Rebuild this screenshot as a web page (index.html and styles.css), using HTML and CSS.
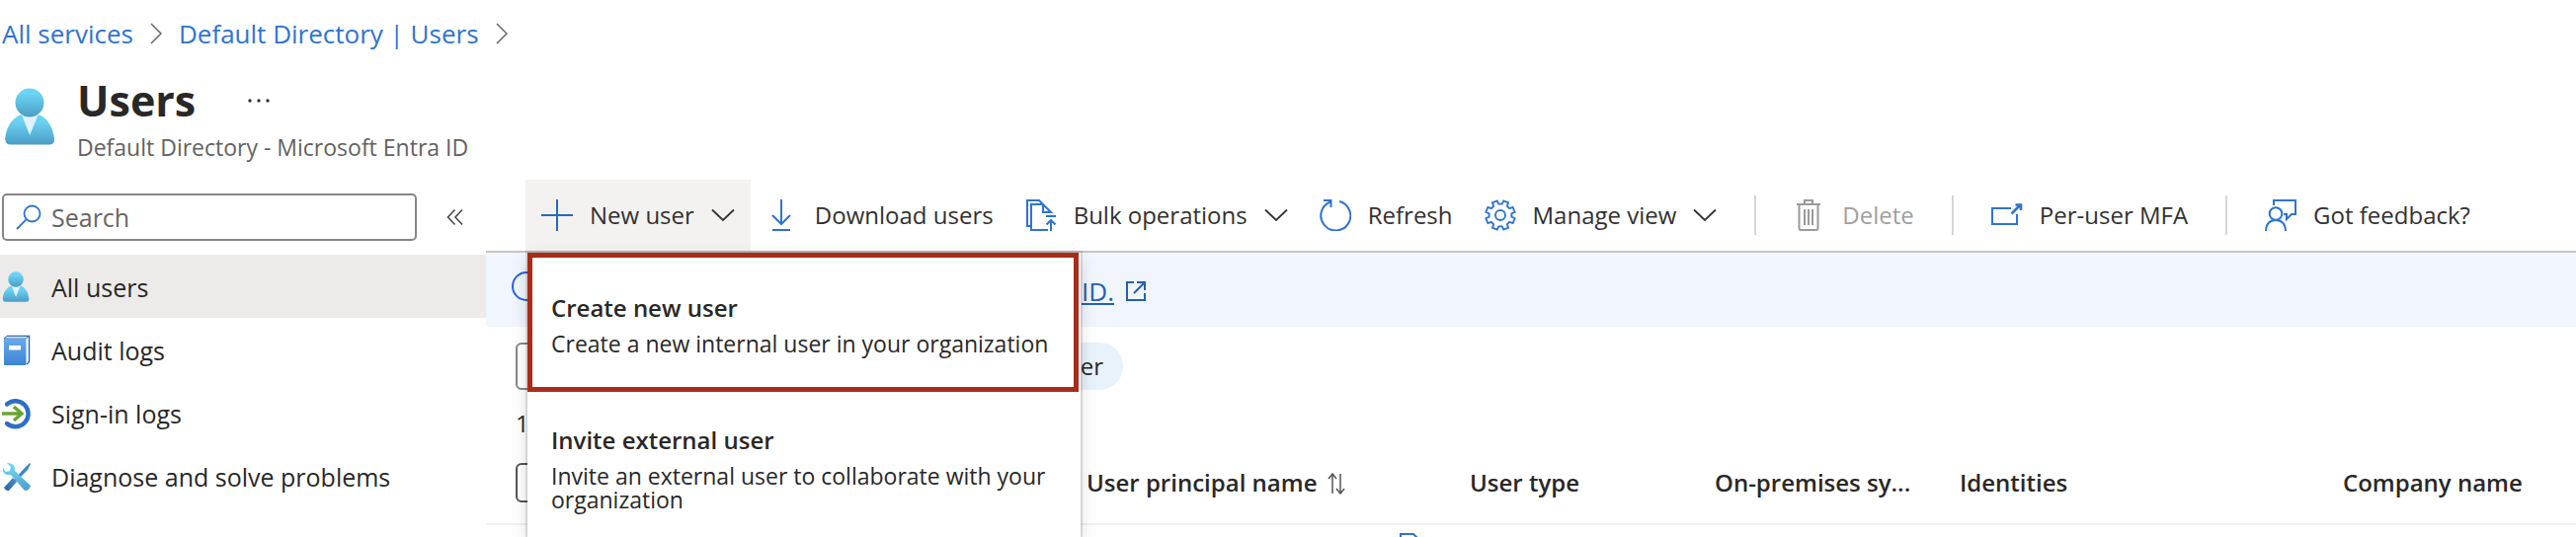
FILE: index.html
```
<!DOCTYPE html>
<html lang="en">
<head>
<meta charset="utf-8">
<title>Users - Microsoft Entra ID</title>
<link rel="stylesheet" href="styles.css">
</head>
<body>
<svg width="0" height="0" class="defs" aria-hidden="true">
  <defs>
    <linearGradient id="skin" x1="0" y1="0" x2="0" y2="1"><stop offset="0.2" stop-color="#6bd3f3"/><stop offset="1" stop-color="#4c9dc6"/></linearGradient>
    <linearGradient id="book" x1="0" y1="0" x2="0" y2="1"><stop offset="0" stop-color="#69aaea"/><stop offset="1" stop-color="#3d83d6"/></linearGradient>
    <linearGradient id="driver" x1="1" y1="0" x2="0" y2="1"><stop offset="0" stop-color="#4793c4"/><stop offset="1" stop-color="#2b5fa8"/></linearGradient>
    <symbol id="person" viewBox="0 0 52 58">
      <path d="M7 57.500h38.500q6 0 5.500-6C49.500 41 45 31 36 27.500H16.500C7.500 31 2 41 1.200 51.500Q1 57.500 7 57.500z" fill="url(#skin)"/>
      <path d="M18 27.500h16.500L26.200 48z" fill="#def3fb"/>
      <circle cx="26" cy="15" r="14.500" fill="url(#skin)"/>
    </symbol>
    <symbol id="down" viewBox="0 0 24 14"><path d="M1 1.500l11 10.500 11-10.500" fill="none" stroke="#333" stroke-width="1.800"/></symbol>
    <symbol id="next" viewBox="0 0 12 22"><path d="M1 1l10 10L1 21" fill="none" stroke="#666" stroke-width="1.500"/></symbol>
  </defs>
</svg>

<nav class="crumbs" aria-label="Breadcrumb">
  <a href="#">All services</a>
  <svg class="next"><use href="#next"/></svg>
  <a href="#">Default Directory | Users</a>
  <svg class="next"><use href="#next"/></svg>
</nav>

<header class="heading">
  <svg class="avatar"><use href="#person"/></svg>
  <div>
    <div class="title-row">
      <h1>Users</h1>
      <button class="more" aria-label="More"><svg width="24" height="6" viewBox="0 0 24 6" fill="#333"><circle cx="3" cy="3" r="1.700"/><circle cx="12" cy="3" r="1.700"/><circle cx="21" cy="3" r="1.700"/></svg></button>
    </div>
    <p class="subtitle">Default Directory - Microsoft Entra ID</p>
  </div>
</header>

<div class="shell">
  <aside class="side">
    <div class="search-row">
      <label class="search">
        <svg width="26" height="26" viewBox="0 0 26 26" fill="none" stroke="#2f74d0" stroke-width="1.800"><circle cx="16.500" cy="9.500" r="8"/><path d="M10.800 15.200L1 25"/></svg>
        <input type="text" placeholder="Search" aria-label="Search">
      </label>
      <button class="collapse" aria-label="Collapse"><svg width="18" height="18" viewBox="0 0 18 18" fill="none" stroke="#444" stroke-width="1.500"><path d="M8.500 1.500L1.500 9l7 7.500M16 1.500L9 9l7 7.500"/></svg></button>
    </div>
    <nav class="menu">
      <a href="#" class="active"><svg class="ico"><use href="#person" width="28" height="31"/></svg>All users</a>
      <a href="#"><svg class="ico" viewBox="0 0 30 32"><path d="M5 1.500h22.500v26L25 30" fill="#fff" stroke="#2f66ad" stroke-width="1.400"/><path d="M2 4L5 1.500h21.500L24.500 4z" fill="#e8f1fb" stroke="#2f66ad"/><rect x="2" y="4" width="22.500" height="27" rx="1" fill="url(#book)"/><rect x="7" y="11" width="12" height="4.500" fill="#fff"/></svg>Audit logs</a>
      <a href="#"><svg class="ico" viewBox="0 0 30 32" fill="none"><path d="M5 6.500A13 13 0 1 1 5 26" stroke="#2d70c3" stroke-width="4.400" stroke-linecap="round"/><path d="M0 16h19" stroke="#69a52e" stroke-width="3.400"/><path d="M12 9l8 7-8 7" stroke="#69a52e" stroke-width="3.400"/></svg>Sign-in logs</a>
      <a href="#"><svg class="ico" viewBox="0 0 30 32"><path d="M28 2l1 1-3 6-12 12-2-2L23 7z" fill="#3f87bd"/><path d="M11 17l4 4-8 9q-3 1-5-3z" fill="url(#driver)"/><path d="M5 2l4 4-1 4-4 1-3-4Q0 15 9 14L23 30q5 0 6-5L13 10Q14 2 5 2z" fill="url(#skin)"/></svg>Diagnose and solve problems</a>
    </nav>
  </aside>

  <main class="main">
    <div class="toolbar">
      <div class="new-wrap">
        <button class="cmd open" aria-expanded="true"><svg width="32" height="32" viewBox="0 0 32 32" stroke="#2b68bd" stroke-width="2"><path d="M16 0v32M0 16h32"/></svg><span>New user</span><svg class="down"><use href="#down"/></svg></button>
        <div class="popup" role="menu">
          <button class="option picked" role="menuitem"><strong>Create new user</strong><span>Create a new internal user in your organization</span></button>
          <button class="option" role="menuitem"><strong>Invite external user</strong><span>Invite an external user to collaborate with your organization</span></button>
        </div>
      </div>
      <button class="cmd"><svg width="32" height="32" viewBox="0 0 32 32" fill="none" stroke="#2f74d0" stroke-width="2"><path d="M15 0v25M6 16l9 9 9-9M6 31h18"/></svg><span>Download users</span></button>
      <button class="cmd"><svg width="32" height="32" viewBox="0 0 32 32" fill="none" stroke="#2f74d0" stroke-width="2"><path d="M6 27H2V1h12l12 12h-8V5M18 5H6v26h17"/><path d="M21 17h10M26 32V21M21.500 25.500L26 21l4.500 4.500"/></svg><span>Bulk operations</span><svg class="down"><use href="#down"/></svg></button>
      <button class="cmd"><svg width="32" height="32" viewBox="0 0 32 32" fill="none" stroke="#2f74d0" stroke-width="2"><path d="M20 2A15 15 0 1 1 11 2.500M4 1h7.500v7"/></svg><span>Refresh</span></button>
      <button class="cmd"><svg width="32" height="32" viewBox="0 0 32 32" fill="none" stroke="#2f74d0" stroke-width="1.900"><circle cx="16" cy="16" r="5"/><path id="gear" d=""/></svg><span>Manage view</span><svg class="down"><use href="#down"/></svg></button>
      <span class="rule"></span>
      <button class="cmd" disabled><svg width="32" height="32" viewBox="0 0 32 32" fill="none" stroke="#9b9a99" stroke-width="2"><path d="M3 5h24M11 5V1h8v4M5.500 5v24q0 2 2 2h15q2 0 2-2V5M11 10v16M15 10v16M19 10v16"/></svg><span>Delete</span></button>
      <span class="rule"></span>
      <button class="cmd"><svg width="32" height="32" viewBox="0 0 32 32" fill="none" stroke="#2f74d0" stroke-width="2"><path d="M20 9H1v16h25V15"/><path d="M20.500 14.500L30 5M24.500 5.500h5.500v5.500" stroke-width="2.600"/></svg><span>Per-user MFA</span></button>
      <span class="rule"></span>
      <button class="cmd"><svg width="32" height="32" viewBox="0 0 32 32" fill="none" stroke="#2f74d0" stroke-width="2"><circle cx="11" cy="14.500" r="6.300"/><path d="M1 32q.500-11 10-11t10 11M9 6V1h22v14h-4l-5 5v-5h-3"/></svg><span>Got feedback?</span></button>
    </div>

    <div class="banner">
      <svg width="30" height="30" viewBox="0 0 30 30" fill="none" stroke="#2b62d9" stroke-width="2"><circle cx="15" cy="15" r="14"/></svg>
      <a href="#"><span>ID.</span><svg width="20" height="20" viewBox="0 0 20 20" fill="none" stroke="#2561ae" stroke-width="2"><path d="M8 1H1v18h18v-7M8 12L18 2M11 1h8v8"/></svg></a>
    </div>
    <div class="filters"><input type="text" aria-label="Filter users"><button class="pill">er</button></div>
    <p class="count">1</p>
    <table class="grid">
      <thead><tr>
        <th class="c-check"><input type="checkbox" aria-label="Select all"></th>
        <th class="c-upn">User principal name <svg width="18" height="22" viewBox="0 0 18 22" fill="none" stroke="#555" stroke-width="1.500"><path d="M5 21V1M1 6l4-5 4 5M13 1v20M9 16l4 5 4-5"/></svg></th>
        <th class="c-type">User type</th><th class="c-sync">On-premises sy...</th><th class="c-id">Identities</th><th>Company name</th>
      </tr></thead>
      <tbody><tr><td></td><td class="doc" colspan="5"><svg width="22" height="4" viewBox="0 0 22 4" fill="none" stroke="#2f74d0" stroke-width="2"><path d="M1 27V1h13l6 6v20z"/></svg></td></tr></tbody>
    </table>
  </main>
</div>
<script src="gear.js"></script>
</body>
</html>
```
FILE: gear.js
```
const pts = [];
for (let i = 0; i < 8; i++) {
  const mid = i * 45 + 22.5;
  for (const [r, off] of [[11.5, -14], [15, -10], [15, 10], [11.5, 14]]) {
    const a = (mid + off) * Math.PI / 180;
    pts.push((16 + r * Math.cos(a)).toFixed(2) + " " + (16 + r * Math.sin(a)).toFixed(2));
  }
}
document.getElementById("gear").setAttribute("d", "M" + pts.join("L") + "z");
```
FILE: styles.css
```
* { box-sizing: border-box; }
body { margin: 0; background: #fff; color: #292827; font: 24px/32px "Open Sans", "Noto Sans", sans-serif; }
button { font: inherit; color: inherit; background: none; border: 0; padding: 0; }
a { color: inherit; text-decoration: none; }
p, h1 { margin: 0; }
svg { flex: none; display: block; }
.defs { position: absolute; }

.crumbs { display: flex; align-items: center; gap: 17px; height: 68px; padding-left: 2px; color: #2f74d0; font-size: 26px; }
.next { width: 12px; height: 22px; }

.heading { display: flex; gap: 22px; padding: 4px 0 0 4px; height: 114px; }
.avatar { width: 52px; height: 58px; margin-top: 17px; }
.title-row { display: flex; align-items: center; gap: 52px; height: 60px; }
h1 { font-size: 43px; line-height: 60px; font-weight: 700; }
.subtitle { font-size: 23px; line-height: 34px; color: #636261; }

.shell { display: flex; }
.side { width: 492px; flex: none; font-size: 25px; }
.search-row { display: flex; align-items: center; gap: 30px; padding: 14px 0 14px 2px; }
.search { display: flex; align-items: center; gap: 10px; width: 420px; height: 48px; padding: 0 12px; border: 2px solid #878685; border-radius: 5px; }
.search input { flex: 1; min-width: 0; border: 0; outline: 0; padding: 0; font: inherit; }
.search input::placeholder { color: #666; opacity: 1; }
.menu a { display: flex; align-items: center; gap: 20px; height: 64px; padding: 2px 0 0 2px; }
.menu .active { background: #ecebe9; }
.ico { width: 30px; height: 32px; }

.main { flex: 1; min-width: 0; }
.toolbar { display: flex; align-items: center; height: 74px; padding-left: 40px; border-bottom: 2px solid #c8c6c4; white-space: nowrap; }
.new-wrap { position: relative; }
.cmd { display: flex; align-items: center; gap: 17px; height: 72px; padding: 0 16px; color: #323130; }
.cmd:disabled { color: #a19f9d; }
.open { background: #f3f2f1; }
.down { width: 24px; height: 14px; }
.rule { width: 2px; height: 40px; margin: 0 22px; background: #d6d5d4; }

.popup { position: absolute; z-index: 2; top: 74px; left: 2px; width: 560px; height: 288px; background: #fff; box-shadow: 0 0 0 2px #0000001a, 0 6px 16px #00000026; }
.option { display: flex; flex-direction: column; gap: 8px; width: 558px; padding: 28px 14px 0 19px; border: 5px solid transparent; text-align: left; white-space: normal; }
.option strong { font-weight: 600; }
.option span { font-size: 23px; line-height: 24px; }
.picked { padding: 35px 14px 32px 19px; border-color: #a72c19; }

.banner { display: flex; align-items: center; justify-content: space-between; height: 75px; padding-left: 26px; background: #f0f5fe; }
.banner svg:first-child { margin-bottom: 8px; }
.banner a { display: flex; align-items: center; gap: 12px; margin: 2px 1448px 0 0; color: #2561ae; font-size: 26px; }
.banner span { text-decoration: underline; }
.filters { display: flex; justify-content: space-between; width: 645px; padding: 16px 0 0 30px; }
.filters input { width: 300px; height: 48px; border: 2px solid #878685; border-radius: 6px; }
.pill { width: 200px; height: 48px; padding-right: 20px; border-radius: 24px; background: #e8f2fb; text-align: right; }
.count { padding: 18px 0 0 30px; line-height: 32px; }
.grid { width: 100%; table-layout: fixed; border-collapse: collapse; }
.grid th { height: 86px; padding: 2px 0 0; border-bottom: 2px solid #f0f0f0; text-align: left; font-weight: 600; white-space: nowrap; }
.grid th svg { display: inline-block; margin-left: 4px; vertical-align: -3px; }
.c-check { width: 608px; }
.grid .c-check { padding-left: 30px; }
.c-check input { appearance: none; display: block; width: 40px; height: 40px; margin: 0; border: 2px solid #555; border-radius: 6px; }
.c-upn { width: 388px; }
.c-type { width: 248px; }
.c-sync { width: 248px; }
.c-id { width: 388px; }
.grid .doc { padding: 8px 0 0 317px; }
```
